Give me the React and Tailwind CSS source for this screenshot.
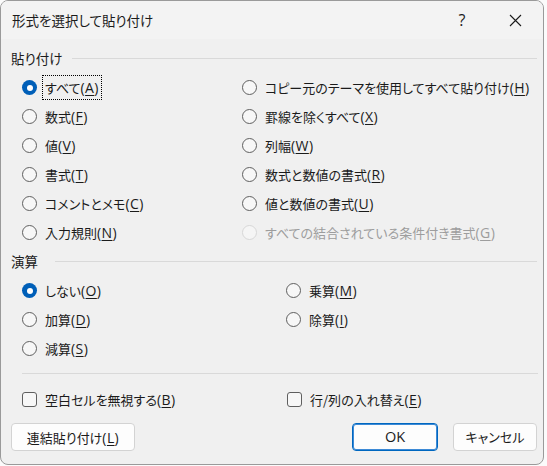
import React from 'react'

const FONT = {
  fontFamily: '"Noto Sans CJK JP", "Noto Sans", sans-serif',
  fontFeatureSettings: '"palt"',
}

const PASTE_LEFT = [
  { label: 'すべて', key: 'A', checked: true, focus: true },
  { label: '数式', key: 'F' },
  { label: '値', key: 'V' },
  { label: '書式', key: 'T' },
  { label: 'コメントとメモ', key: 'C' },
  { label: '入力規則', key: 'N' },
]

const PASTE_RIGHT = [
  { label: 'コピー元のテーマを使用してすべて貼り付け', key: 'H' },
  { label: '罫線を除くすべて', key: 'X' },
  { label: '列幅', key: 'W' },
  { label: '数式と数値の書式', key: 'R' },
  { label: '値と数値の書式', key: 'U' },
  { label: 'すべての結合されている条件付き書式', key: 'G', disabled: true },
]

// mnemonic suffix, drawn in a Latin face like the original's Segoe/Yu Gothic
function Label({ text, k }) {
  return (
    <span className="whitespace-nowrap">
      {text}
      <span className="text-[14px] tracking-[0.4px]" style={{ fontFamily: '"Open Sans", "Noto Sans", sans-serif' }}>
        (<span className="underline underline-offset-2">{k}</span>)
      </span>
    </span>
  )
}

function Radio({ item }) {
  const { label, key, checked, focus, disabled } = item
  return (
    <div className="flex items-center h-[29px]">
      {checked ? (
        <span className="w-[15px] h-[15px] rounded-full bg-[#005fb8] flex items-center justify-center shrink-0">
          <span className="w-[6px] h-[6px] rounded-full bg-white" />
        </span>
      ) : (
        <span
          className={
            disabled
              ? 'w-[15px] h-[15px] rounded-full border border-[#d6d6d6] bg-[#f5f5f5] shrink-0'
              : 'w-[15px] h-[15px] rounded-full border border-[#5f5f5f] bg-[#f7f7f7] shrink-0'
          }
        />
      )}
      <span
        className={
          'ml-[6px] px-[2px] h-[23px] flex items-center whitespace-nowrap ' +
          (focus ? 'outline outline-1 outline-dotted outline-black ' : '') +
          (disabled ? 'text-[#9d9d9d]' : 'text-[#1b1b1b]')
        }
      >
        <Label text={label} k={key} />
      </span>
    </div>
  )
}

function Checkbox({ label, k }) {
  return (
    <div className="flex items-center h-[28px]">
      <span className="w-[15px] h-[15px] rounded-[3px] border border-[#5f5f5f] bg-[#f7f7f7] shrink-0" />
      <span className="ml-[8px] text-[#1b1b1b]">
        <Label text={label} k={k} />
      </span>
    </div>
  )
}

function Section({ title, lineLeft }) {
  return (
    <div className="flex items-center h-[20px] pl-[10px] pr-[6px]">
      <span className="text-[13.5px] text-[#1b1b1b] whitespace-nowrap">{title}</span>
      <span className="flex-1 h-px bg-[#d9d9d9]" style={{ marginLeft: lineLeft }} />
    </div>
  )
}

function Button({ children, primary, className }) {
  return (
    <button
      className={
        'h-[28px] rounded-[4px] bg-[#fdfdfd] text-[#1b1b1b] flex items-center justify-center ' +
        (primary ? 'border border-[#0067c0] shadow-[inset_0_0_0_1px_#3d8ad6] ' : 'border border-[#d3d3d3] ') +
        className
      }
    >
      {children}
    </button>
  )
}

export default function App() {
  return (
    <div className="w-[547px] h-[466px] bg-[#fbfbfb] overflow-hidden text-[13px]" style={FONT}>
      <div className="w-[544px] h-[465px] rounded-[8px] border border-[#9a9a9a] bg-[#f0f0f0] overflow-hidden flex flex-col">
        <div className="h-[38px] bg-[#f3f3f3] flex items-center pl-[11px] shrink-0">
          <span className="text-[13.5px] text-[#1b1b1b] flex-1">形式を選択して貼り付け</span>
          <span className="text-[16px] text-[#1b1b1b] w-[20px] text-center mr-[37px]" style={{ fontFamily: '"Open Sans", sans-serif' }}>?</span>
          <svg width="13" height="13" viewBox="0 0 13 13" className="mr-[21px]">
            <path d="M1 1 L12 12 M12 1 L1 12" stroke="#1b1b1b" strokeWidth="1.1" />
          </svg>
        </div>

        <div className="mt-[9px]">
          <Section title="貼り付け" lineLeft="10px" />
        </div>
        <div className="flex mt-[5px]">
          <div className="w-[241px] pl-[21px] flex flex-col">
            {PASTE_LEFT.map(it => <Radio key={it.key} item={it} />)}
          </div>
          <div className="flex flex-col">
            {PASTE_RIGHT.map(it => <Radio key={it.key} item={it} />)}
          </div>
        </div>

        <div className="mt-[4px]">
          <Section title="演算" lineLeft="17px" />
        </div>
        <div className="flex mt-[5px]">
          <div className="w-[285px] pl-[21px] flex flex-col">
            <Radio item={{ label: 'しない', key: 'O', checked: true }} />
            <Radio item={{ label: '加算', key: 'D' }} />
            <Radio item={{ label: '減算', key: 'S' }} />
          </div>
          <div className="flex flex-col">
            <Radio item={{ label: '乗算', key: 'M' }} />
            <Radio item={{ label: '除算', key: 'I' }} />
          </div>
        </div>

        <div className="mt-[10px] ml-[21px] mr-[5px] h-px bg-[#d9d9d9]" />

        <div className="flex mt-[11px]">
          <div className="w-[286px] pl-[21px]">
            <Checkbox label="空白セルを無視する" k="B" />
          </div>
          <Checkbox label="行/列の入れ替え" k="E" />
        </div>

        <div className="flex mt-[10px] pl-[10px]">
          <Button className="w-[124px]">
            <Label text="連結貼り付け" k="L" />
          </Button>
          <Button primary className="w-[86px] ml-[217px] text-[14.5px]">
            <span style={{ fontFamily: '"Open Sans", sans-serif' }}>OK</span>
          </Button>
          <Button className="w-[84px] ml-[15px]">キャンセル</Button>
        </div>
      </div>
    </div>
  )
}
